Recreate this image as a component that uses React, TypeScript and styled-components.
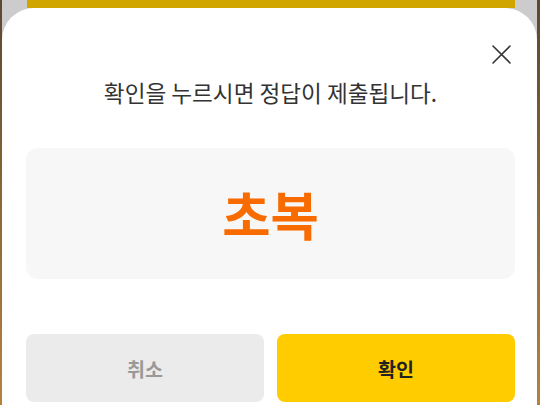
import React from 'react';
import styled, {createGlobalStyle} from 'styled-components';

const GlobalStyle = createGlobalStyle`
  html, body {
    margin: 0;
    padding: 0;
    background: #cccccc;
  }
  body {
    font-family: "Noto Sans CJK KR", "Noto Sans", sans-serif;
  }
`;

const Frame = styled.div`
  width: 540px;
  height: 405px;
  box-sizing: border-box;
  padding: 0 3px 0 2px;
  background: linear-gradient(180deg, #5a4830 0%, #8a6838 50%, #b5823e 100%);
  display: flex;
  overflow: hidden;
`;

const Backdrop = styled.div`
  flex: 1;
  display: flex;
  flex-direction: column;
  background: #cccccc;
`;

const BehindBar = styled.div`
  height: 8px;
  margin: 0 22px 0 25px;
  background: #d1a500;
  flex-shrink: 0;
`;

const Sheet = styled.div`
  flex: 1;
  display: flex;
  flex-direction: column;
  background: #ffffff;
  border-radius: 32px 32px 0 0;
  padding: 0 22px 0 24px;
`;

const CloseRow = styled.div`
  display: flex;
  justify-content: flex-end;
  margin-top: 37px;
  padding-right: 4px;
`;

const CloseButton = styled.button`
  width: 19px;
  height: 19px;
  padding: 0;
  border: none;
  background: transparent;
  cursor: pointer;
  display: flex;
`;

const Prompt = styled.p`
  margin: 14px 0 0;
  font-size: 22.6px;
  line-height: 30px;
  text-align: center;
  color: #333333;
  font-weight: 400;
`;

const AnswerBox = styled.div`
  margin-top: 40px;
  height: 131px;
  border-radius: 12px;
  background: #f7f7f7;
  display: flex;
  align-items: center;
  justify-content: center;
`;

const AnswerText = styled.span`
  font-size: 52.5px;
  font-weight: 700;
  color: #f76b00;
  line-height: 1;
`;

const ButtonRow = styled.div`
  margin-top: 55px;
  display: grid;
  grid-template-columns: 1fr 1fr;
  gap: 13px;
`;

type Mode = 'cancel' | 'confirm';

const ActionButton = styled.button<{$mode: Mode}>`
  height: 68px;
  border: none;
  border-radius: 8px;
  font-family: inherit;
  font-size: 19.5px;
  font-weight: 700;
  cursor: pointer;
  background: ${p => (p.$mode === 'confirm' ? '#ffcc00' : '#ebebeb')};
  color: ${p => (p.$mode === 'confirm' ? '#222222' : '#999999')};
`;

const CloseIcon = () => (
  <svg width="19" height="19" viewBox="0 0 19 19" fill="none">
    <path d="M1 1L18 18M18 1L1 18" stroke="#333" strokeWidth="1.6" strokeLinecap="round" />
  </svg>
);

export default function App() {
  return (
    <>
      <GlobalStyle />
      <Frame>
        <Backdrop>
          <BehindBar />
          <Sheet>
            <CloseRow>
              <CloseButton aria-label="닫기">
                <CloseIcon />
              </CloseButton>
            </CloseRow>
            <Prompt>확인을 누르시면 정답이 제출됩니다.</Prompt>
            <AnswerBox>
              <AnswerText>초복</AnswerText>
            </AnswerBox>
            <ButtonRow>
              <ActionButton $mode="cancel">취소</ActionButton>
              <ActionButton $mode="confirm">확인</ActionButton>
            </ButtonRow>
          </Sheet>
        </Backdrop>
      </Frame>
    </>
  );
}
